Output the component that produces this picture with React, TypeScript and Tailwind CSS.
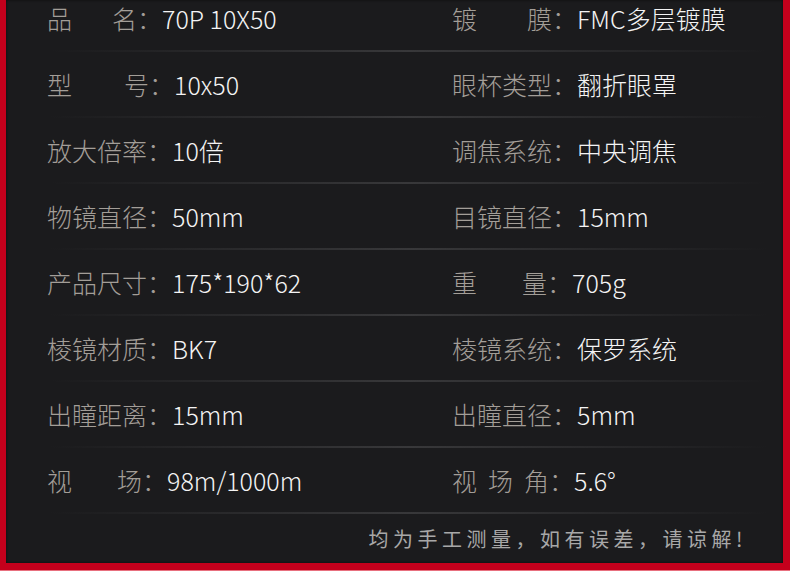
const rows = [
  [
    { label: ['品', '名：'], gap: 'w-[40px]', value: '70P 10X50' },
    { label: ['镀', '膜：'], gap: 'w-[50px]', value: 'FMC多层镀膜' },
  ],
  [
    { label: ['型', '号：'], gap: 'w-[52px]', value: '10x50' },
    { label: ['眼杯类型：'], gap: '', value: '翻折眼罩' },
  ],
  [
    { label: ['放大倍率：'], gap: '', value: '10倍' },
    { label: ['调焦系统：'], gap: '', value: '中央调焦' },
  ],
  [
    { label: ['物镜直径：'], gap: '', value: '50mm' },
    { label: ['目镜直径：'], gap: '', value: '15mm' },
  ],
  [
    { label: ['产品尺寸：'], gap: '', value: '175*190*62' },
    { label: ['重', '量：'], gap: 'w-[45px]', value: '705g' },
  ],
  [
    { label: ['棱镜材质：'], gap: '', value: 'BK7' },
    { label: ['棱镜系统：'], gap: '', value: '保罗系统' },
  ],
  [
    { label: ['出瞳距离：'], gap: '', value: '15mm' },
    { label: ['出瞳直径：'], gap: '', value: '5mm' },
  ],
  [
    { label: ['视', '场：'], gap: 'w-[45px]', value: '98m/1000m' },
    { label: ['视', '场', '角：'], gap: 'w-[11px]', value: '5.6°' },
  ],
]

type Cell = { label: string[]; gap: string; value: string }

function SpecCell({ cell }: { cell: Cell }) {
  return (
    <div className="flex items-center whitespace-nowrap">
      <span className="flex text-[#a39e98]">
        {cell.label.map((part, i) => (
          <span key={i} className="flex">
            {i > 0 && <span className={cell.gap} />}
            <span>{part}</span>
          </span>
        ))}
      </span>
      <span className="text-[#f4f4f4] font-light">{cell.value}</span>
    </div>
  )
}

export default function App() {
  return (
    <div className="w-[790px] h-[571px] bg-[#c4001c] pl-[6px] pr-[7px] pb-[7px] border-b border-[#e8707f] font-['Noto_Sans_CJK_SC','Liberation_Sans',sans-serif]">
      <div className="h-full bg-[#1b1b1d] overflow-hidden shadow-[inset_0_0_3px_rgba(0,0,0,0.6)]">
        <div className="-mt-[14px]">
          {rows.map((row, index) => (
            <div key={index}>
              <div className="h-[64px] pt-[1px] pl-[41px] grid grid-cols-[405px_1fr] items-center text-[25px] leading-none font-light">
                <SpecCell cell={row[0]} />
                <SpecCell cell={row[1]} />
              </div>
              <div className="ml-[44px] mr-[16px] h-[2px] bg-gradient-to-r from-transparent via-[#38383a] to-transparent" />
            </div>
          ))}
          <div className="h-[50px] flex items-center justify-end pr-[36px] text-[20px] leading-none tracking-[4.5px] text-[#a8a8a8]">
            均为手工测量，如有误差，请谅解!
          </div>
        </div>
      </div>
    </div>
  )
}
